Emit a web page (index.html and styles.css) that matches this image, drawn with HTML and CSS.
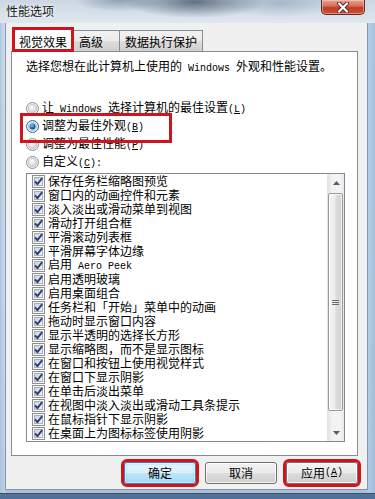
FILE: index.html
```html
<!DOCTYPE html>
<html lang="zh-CN">
<head>
<meta charset="utf-8">
<title>性能选项</title>
<link rel="stylesheet" href="styles.css">
</head>
<body>
<svg class="defs" width="0" height="0" aria-hidden="true">
  <defs>
    <linearGradient id="cbg" x1="0" y1="0" x2="1" y2="1">
      <stop offset="0" stop-color="#cbd1d8"/>
      <stop offset="1" stop-color="#f3f5f7"/>
    </linearGradient>
    <radialGradient id="rg" cx="0.4" cy="0.35" r="0.7">
      <stop offset="0" stop-color="#ffffff"/>
      <stop offset="1" stop-color="#c9ced4"/>
    </radialGradient>
    <radialGradient id="rdot" cx="0.4" cy="0.35" r="0.7">
      <stop offset="0" stop-color="#8fd0f5"/>
      <stop offset="0.5" stop-color="#2a7ab8"/>
      <stop offset="1" stop-color="#0d3f6e"/>
    </radialGradient>
    <symbol id="cb" viewBox="0 0 13 13">
      <rect x="0.5" y="0.5" width="12" height="12" fill="#f6f6f6" stroke="#8e8f8f"/>
      <rect x="2.5" y="2.5" width="8" height="8" fill="url(#cbg)" stroke="#a9b0b8"/>
      <path d="M3 6.3 L5.4 9.2 L10.2 3.2" fill="none" stroke="#2b3f76" stroke-width="1.9" stroke-linejoin="round"/>
    </symbol>
    <symbol id="rd" viewBox="0 0 13 13">
      <circle cx="6.5" cy="6.5" r="6" fill="#f4f4f4" stroke="#8e8f8f"/>
      <circle cx="6.5" cy="6.5" r="4.2" fill="url(#rg)" stroke="#b5bac0" stroke-width="0.7"/>
    </symbol>
    <symbol id="rdon" viewBox="0 0 13 13">
      <circle cx="6.5" cy="6.5" r="6" fill="#f4f4f4" stroke="#2c628b"/>
      <circle cx="6.5" cy="6.5" r="4.2" fill="#dce9f3" stroke="#9fb8cc" stroke-width="0.7"/>
      <circle cx="6.5" cy="6.5" r="3" fill="url(#rdot)"/>
    </symbol>
  </defs>
</svg>

<div class="window">
  <div class="titlebar">
    <span class="title">性能选项</span>
    <span class="close">
      <svg width="16" height="11" viewBox="0 0 16 11">
        <path d="M4 1.5 L12 9.5 M12 1.5 L4 9.5" stroke="#5a2a24" stroke-width="4" stroke-linecap="round"/>
        <path d="M4 1.5 L12 9.5 M12 1.5 L4 9.5" stroke="#ffffff" stroke-width="2.2" stroke-linecap="round"/>
      </svg>
    </span>
  </div>

  <div class="client">
    <div class="tabs">
      <div class="tab active mark">视觉效果</div>
      <div class="tab tab-adv">高级</div>
      <div class="tab tab-dep">数据执行保护</div>
    </div>

    <div class="panel">
      <p class="desc">选择您想在此计算机上使用的<span class="en"> Windows </span>外观和性能设置。</p>

      <div class="radios">
        <div class="radio"><svg class="rbox"><use href="#rd"/></svg><span>让<span class="en"> Windows </span>选择计算机的最佳设置<span class="en">(<u>L</u>)</span></span></div>
        <div class="radio marked"><svg class="rbox"><use href="#rdon"/></svg><span>调整为最佳外观<span class="en">(<u>B</u>)</span></span></div>
        <div class="radio"><svg class="rbox"><use href="#rd"/></svg><span>调整为最佳性能<span class="en">(<u>P</u>)</span></span></div>
        <div class="radio"><svg class="rbox"><use href="#rd"/></svg><span>自定义<span class="en">(<u>C</u>):</span></span></div>
      </div>

      <div class="listbox">
        <div class="items">
          <div class="item"><svg class="cbox"><use href="#cb"/></svg><span>保存任务栏缩略图预览</span></div>
          <div class="item"><svg class="cbox"><use href="#cb"/></svg><span>窗口内的动画控件和元素</span></div>
          <div class="item"><svg class="cbox"><use href="#cb"/></svg><span>淡入淡出或滑动菜单到视图</span></div>
          <div class="item"><svg class="cbox"><use href="#cb"/></svg><span>滑动打开组合框</span></div>
          <div class="item"><svg class="cbox"><use href="#cb"/></svg><span>平滑滚动列表框</span></div>
          <div class="item"><svg class="cbox"><use href="#cb"/></svg><span>平滑屏幕字体边缘</span></div>
          <div class="item"><svg class="cbox"><use href="#cb"/></svg><span>启用<span class="en"> Aero Peek</span></span></div>
          <div class="item"><svg class="cbox"><use href="#cb"/></svg><span>启用透明玻璃</span></div>
          <div class="item"><svg class="cbox"><use href="#cb"/></svg><span>启用桌面组合</span></div>
          <div class="item"><svg class="cbox"><use href="#cb"/></svg><span>任务栏和「开始」菜单中的动画</span></div>
          <div class="item"><svg class="cbox"><use href="#cb"/></svg><span>拖动时显示窗口内容</span></div>
          <div class="item"><svg class="cbox"><use href="#cb"/></svg><span>显示半透明的选择长方形</span></div>
          <div class="item"><svg class="cbox"><use href="#cb"/></svg><span>显示缩略图，而不是显示图标</span></div>
          <div class="item"><svg class="cbox"><use href="#cb"/></svg><span>在窗口和按钮上使用视觉样式</span></div>
          <div class="item"><svg class="cbox"><use href="#cb"/></svg><span>在窗口下显示阴影</span></div>
          <div class="item"><svg class="cbox"><use href="#cb"/></svg><span>在单击后淡出菜单</span></div>
          <div class="item"><svg class="cbox"><use href="#cb"/></svg><span>在视图中淡入淡出或滑动工具条提示</span></div>
          <div class="item"><svg class="cbox"><use href="#cb"/></svg><span>在鼠标指针下显示阴影</span></div>
          <div class="item"><svg class="cbox"><use href="#cb"/></svg><span>在桌面上为图标标签使用阴影</span></div>
        </div>
        <div class="vscroll">
          <div class="sb-btn"><svg width="7" height="4" viewBox="0 0 7 4"><path d="M0 4 L3.5 0 L7 4 Z" fill="#4e5d78"/></svg></div>
          <div class="sb-track">
            <div class="sb-thumb">
              <svg width="7" height="7" viewBox="0 0 7 7"><path d="M0 1.5 H7 M0 3.5 H7 M0 5.5 H7" stroke="#6b6b6b" stroke-width="1"/></svg>
            </div>
          </div>
          <div class="sb-btn"><svg width="7" height="4" viewBox="0 0 7 4"><path d="M0 0 L3.5 4 L7 0 Z" fill="#4e5d78"/></svg></div>
        </div>
      </div>
    </div>

    <div class="buttons">
      <button class="btn default mark">确定</button>
      <button class="btn">取消</button>
      <button class="btn mark">应用<span class="en">(<u>A</u>)</span></button>
    </div>
  </div>
</div>
</body>
</html>
```

FILE: styles.css
```css
* {
  box-sizing: border-box;
  margin: 0;
  padding: 0;
}

html, body {
  width: 375px;
  height: 499px;
  overflow: hidden;
}

body {
  font-family: "Noto Sans CJK SC", sans-serif;
  font-size: 12px;
  line-height: 14px;
  color: #000;
  background: linear-gradient(180deg, #d3dee9 0%, #c6d5e5 55%, #9db6d2 85%, #4f6f97 100%);
}

.defs {
  position: absolute;
  width: 0;
  height: 0;
  overflow: hidden;
}

.en {
  font-family: "Liberation Mono", monospace;
  font-size: 10px;
  white-space: pre;
}

.window {
  height: 494px;
  display: flex;
  flex-direction: column;
  border-bottom: 1px solid #3e4d60;
  background:
    linear-gradient(90deg, rgba(170,195,222,0.9) 0, rgba(205,220,235,0.6) 5px, transparent 6px, transparent 367px, rgba(180,204,228,0.9) 368px, rgba(160,188,218,0.9) 375px),
    linear-gradient(180deg, #d8e2ec 0%, #cad8e6 60%, #a9c0da 100%);
}

/* title bar */
.titlebar {
  height: 23px;
  flex: none;
  display: flex;
  justify-content: space-between;
  align-items: flex-start;
  padding-left: 6px;
  background:
    radial-gradient(ellipse 70px 16px at 195px 2px, rgba(70,86,108,0.8), rgba(70,86,108,0) 100%),
    radial-gradient(ellipse 45px 12px at 120px 0px, rgba(105,122,145,0.6), rgba(105,122,145,0) 100%),
    radial-gradient(ellipse 60px 14px at 280px 3px, rgba(130,150,175,0.5), rgba(130,150,175,0) 100%),
    linear-gradient(180deg, #cbd7e3 0%, #dfe7ef 100%);
}

.title {
  line-height: 22px;
  color: #151515;
  text-shadow: 0 0 5px rgba(255,255,255,0.95), 0 0 2px rgba(255,255,255,0.9);
}

.close {
  width: 44px;
  height: 15px;
  margin-right: 10px;
  display: flex;
  align-items: center;
  justify-content: center;
  border: 1px solid #5a2c27;
  border-top: none;
  border-radius: 0 0 5px 5px;
  background: linear-gradient(180deg, #e6a293 0%, #d8735e 40%, #c43d22 55%, #cf5032 100%);
  box-shadow: inset 0 0 0 1px rgba(255,220,210,0.45);
}

/* client */
.client {
  height: 467px;
  flex: none;
  margin: 0 7px 0 5px;
  padding: 4px 9px 0 5px;
  background: #f0f0f0;
  border: 1px solid #8596aa;
  border-top: none;
  display: flex;
  flex-direction: column;
}

/* tabs */
.tabs {
  height: 24px;
  flex: none;
  display: flex;
  align-items: flex-end;
  padding-left: 1px;
}

.tab {
  height: 21px;
  padding: 4px 0 0 5px;
  border: 1px solid #898c95;
  border-bottom: none;
  border-left: none;
  background: linear-gradient(180deg, #f2f2f2 0%, #ebebeb 50%, #dddddd 50%, #cfcfcf 100%);
  white-space: nowrap;
}

.tab.active {
  position: relative;
  z-index: 1;
  width: 62px;
  height: 25px;
  margin-bottom: -1px;
  padding: 7px 0 0 6px;
  border-left: 1px solid #898c95;
  background: #ffffff;
}

.tab-adv {
  width: 46px;
}

.tab-dep {
  width: 83px;
}

.mark {
  outline: 3px solid #d0141d;
  outline-offset: -3px;
}

/* panel */
.panel {
  height: 405px;
  flex: none;
  display: flex;
  flex-direction: column;
  padding: 7px 12px 0 14px;
  background: #ffffff;
  border: 1px solid #898c95;
}

.desc {
  height: 14px;
  margin-bottom: 26px;
  white-space: nowrap;
}

.radios {
  display: flex;
  flex-direction: column;
}

.radio {
  height: 18px;
  display: flex;
  align-items: center;
  gap: 3px;
  white-space: nowrap;
}

.radio.marked {
  position: relative;
}

.radio.marked::after {
  content: "";
  position: absolute;
  left: -6px;
  top: -4px;
  width: 146px;
  height: 24px;
  border: 3px solid #d0141d;
}

.rbox {
  width: 13px;
  height: 13px;
  flex: none;
}

/* listbox */
.listbox {
  margin-top: 2px;
  width: 319px;
  height: 269px;
  flex: none;
  display: flex;
  border: 1px solid #828790;
  background: #ffffff;
}

.items {
  flex: 1;
  display: flex;
  flex-direction: column;
}

.item {
  height: 14px;
  flex: none;
  display: flex;
  align-items: center;
  gap: 3px;
  padding-left: 5px;
  white-space: nowrap;
}

.cbox {
  width: 13px;
  height: 13px;
  flex: none;
}

/* scrollbar */
.vscroll {
  width: 17px;
  flex: none;
  display: flex;
  flex-direction: column;
  background: linear-gradient(90deg, #e4e4e4 0%, #f3f3f3 25%, #f3f3f3 75%, #e9e9e9 100%);
  border-left: 1px solid #e6e6e6;
}

.sb-btn {
  height: 17px;
  flex: none;
  display: flex;
  align-items: center;
  justify-content: center;
}

.sb-track {
  flex: 1;
  padding: 2px 0 13px 0;
  display: flex;
  flex-direction: column;
}

.sb-thumb {
  flex: 1;
  margin: 0 1px 0 0;
  display: flex;
  align-items: center;
  justify-content: center;
  border: 1px solid #9a9a9a;
  border-radius: 2px;
  background: linear-gradient(90deg, #f5f5f5 0%, #ececec 45%, #dcdcdc 55%, #d2d2d2 100%);
  box-shadow: inset 0 0 0 1px rgba(255,255,255,0.7);
}

/* buttons */
.buttons {
  margin-top: 6px;
  display: flex;
  justify-content: flex-end;
  gap: 9px;
}

.btn {
  width: 72px;
  height: 22px;
  font-family: "Noto Sans CJK SC", sans-serif;
  font-size: 12px;
  line-height: 14px;
  color: #000;
  border: 1px solid #707070;
  border-radius: 3px;
  background: linear-gradient(180deg, #f2f2f2 0%, #ebebeb 50%, #dddddd 50%, #cfcfcf 100%);
  box-shadow: inset 0 0 0 1px rgba(255,255,255,0.75);
  display: flex;
  align-items: center;
  justify-content: center;
}

.btn.default {
  border-color: #3c7fb1;
  background: linear-gradient(180deg, #eaf6fd 0%, #d9f0fc 50%, #bee6fd 50%, #a7d9f5 100%);
  box-shadow: inset 0 0 0 1px rgba(255,255,255,0.6), inset 0 0 2px 1px rgba(100,190,240,0.6);
}

.btn.mark {
  outline-offset: 0;
}
```
